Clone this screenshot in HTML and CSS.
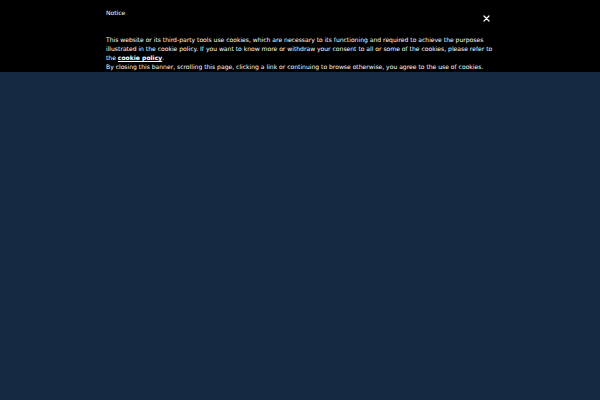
FILE: index.html
```html
<!DOCTYPE html>
<html>
<head>
<meta charset="utf-8">
<link rel="stylesheet" href="styles.css">
</head>
<body>
<div class="banner">
  <div class="inner">
    <div class="head">
      <div class="title">Notice</div>
      <button class="close" aria-label="Close">
        <svg width="7" height="7" viewBox="0 0 7 7"><path d="M1 1L6 6M6 1L1 6" stroke="#fff" stroke-width="1.2" stroke-linecap="round"/></svg>
      </button>
    </div>
    <p class="text">This website or its third-party tools use cookies, which are necessary to its functioning and required to achieve the purposes illustrated in the cookie policy. If you want to know more or withdraw your consent to all or some of the cookies, please refer to the <a href="#">cookie policy</a>.<br>By closing this banner, scrolling this page, clicking a link or continuing to browse otherwise, you agree to the use of cookies.</p>
  </div>
</div>
</body>
</html>
```
FILE: styles.css
```css
html, body {
  margin: 0;
  padding: 0;
  height: 100%;
}
body {
  background: #132a42;
  font-family: "DejaVu Sans", sans-serif;
  color: #fff;
}
.banner {
  background: #000;
  height: 72px;
  box-sizing: border-box;
}
.inner {
  width: 390px;
  margin: 0 auto;
  padding: 8px 0 0 1px;
  box-sizing: border-box;
}
.head {
  display: flex;
  justify-content: space-between;
  align-items: flex-start;
}
.title {
  font-size: 6px;
  line-height: 9px;
}
.close {
  background: none;
  border: 0;
  padding: 0;
  margin-top: 7px;
  margin-right: 5px;
  width: 7px;
  height: 7px;
  display: flex;
}
.text {
  font-size: 6.05px;
  line-height: 9px;
  margin: 13px 0 0;
}
.text a {
  color: #fff;
  font-weight: bold;
  text-decoration: underline;
}
```
